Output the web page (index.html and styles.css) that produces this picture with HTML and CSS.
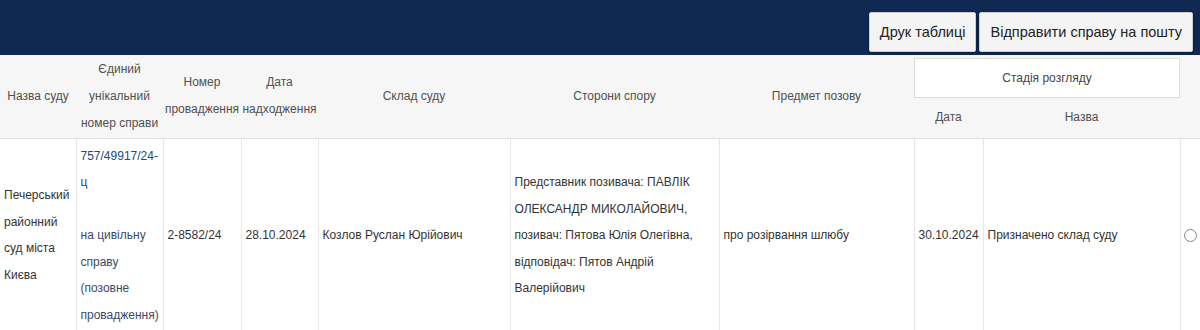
FILE: index.html
```html
<!DOCTYPE html>
<html lang="uk">
<head>
<meta charset="utf-8">
<title>Справи</title>
<link rel="stylesheet" href="styles.css">
</head>
<body>
<div class="topbar">
  <button class="btn">Друк таблиці</button>
  <button class="btn">Відправити справу на пошту</button>
</div>
<table class="cases">
  <colgroup>
    <col class="w-court">
    <col class="w-num">
    <col class="w-proc">
    <col class="w-date">
    <col class="w-judges">
    <col class="w-parties">
    <col class="w-subject">
    <col class="w-sdate">
    <col class="w-sname">
    <col class="w-sel">
  </colgroup>
  <thead>
    <tr class="h1">
      <th rowspan="2">Назва суду</th>
      <th rowspan="2">Єдиний унікальний номер справи</th>
      <th rowspan="2">Номер провадження</th>
      <th rowspan="2">Дата надходження</th>
      <th rowspan="2">Склад суду</th>
      <th rowspan="2">Сторони спору</th>
      <th rowspan="2">Предмет позову</th>
      <th colspan="2" class="stage-cell"><div class="stage">Стадія розгляду</div></th>
      <th rowspan="2"></th>
    </tr>
    <tr class="h2">
      <th>Дата</th>
      <th>Назва</th>
    </tr>
  </thead>
  <tbody>
    <tr>
      <td>Печерський районний суд міста Києва</td>
      <td class="case"><a class="case-link" href="#">757/49917/24-ц</a><br><br><span class="case-kind">на цивільну справу (позовне провадження)</span></td>
      <td>2-8582/24</td>
      <td>28.10.2024</td>
      <td>Козлов Руслан Юрійович</td>
      <td>Представник позивача: ПАВЛІК ОЛЕКСАНДР МИКОЛАЙОВИЧ, позивач: Пятова Юлія Олегівна, відповідач: Пятов Андрій Валерійович</td>
      <td>про розірвання шлюбу</td>
      <td>30.10.2024</td>
      <td>Призначено склад суду</td>
      <td class="sel"><span class="radio"></span></td>
    </tr>
  </tbody>
</table>
</body>
</html>
```

FILE: styles.css
```css
html, body {
  margin: 0;
  padding: 0;
  background: #ffffff;
  font-family: "Liberation Sans", Arial, sans-serif;
}

.topbar {
  height: 55px;
  box-sizing: border-box;
  background: #0f2952;
  display: flex;
  justify-content: flex-end;
  align-items: flex-start;
  gap: 3px;
  padding: 12px 7px 0 0;
}

.btn {
  height: 40px;
  padding: 0 10px;
  background: #f4f4f4;
  border: 1px solid #cfcfcf;
  border-radius: 2px;
  box-shadow: 0 1px 3px rgba(0, 0, 0, 0.35);
  font-family: "Liberation Sans", Arial, sans-serif;
  font-size: 14.5px;
  color: #222222;
  cursor: pointer;
}

.cases {
  width: 1200px;
  table-layout: fixed;
  border-collapse: collapse;
  font-size: 12px;
}

.w-court { width: 76px; }
.w-num { width: 87px; }
.w-proc { width: 78px; }
.w-date { width: 77px; }
.w-judges { width: 192px; }
.w-parties { width: 209px; }
.w-subject { width: 195px; }
.w-sdate { width: 69px; }
.w-sname { width: 197px; }
.w-sel { width: 20px; }

.cases thead {
  background: #f6f6f6;
}

.cases th {
  font-weight: normal;
  color: #505050;
  line-height: 27px;
  padding: 0;
  text-align: center;
  vertical-align: middle;
}

.cases thead tr.h1 {
  height: 43px;
}

.cases thead tr.h2 {
  height: 40px;
}

.cases thead tr.h2 th {
  border-bottom: 1px solid #e0e0e0;
}

.cases thead tr.h1 th[rowspan] {
  border-bottom: 1px solid #e0e0e0;
}

.cases th.stage-cell {
  padding-top: 3px;
  vertical-align: top;
}

.stage {
  height: 38px;
  line-height: 38px;
  background: #ffffff;
  border: 1px solid #dddddd;
  color: #444444;
}

.cases td {
  color: #333333;
  line-height: 26.5px;
  padding: 4px 4px;
  vertical-align: middle;
  text-align: left;
  border-left: 1px solid #e6e6e6;
}

.cases td:first-child {
  border-left: none;
}

.case-link {
  color: #23497e;
  text-decoration: none;
}

.case-kind {
  color: #3d4a60;
}

.cases td.sel {
  padding: 0;
  text-align: center;
}

.radio {
  display: inline-block;
  width: 11px;
  height: 11px;
  border: 1px solid #858585;
  border-radius: 50%;
  vertical-align: middle;
  background: #ffffff;
}
```
